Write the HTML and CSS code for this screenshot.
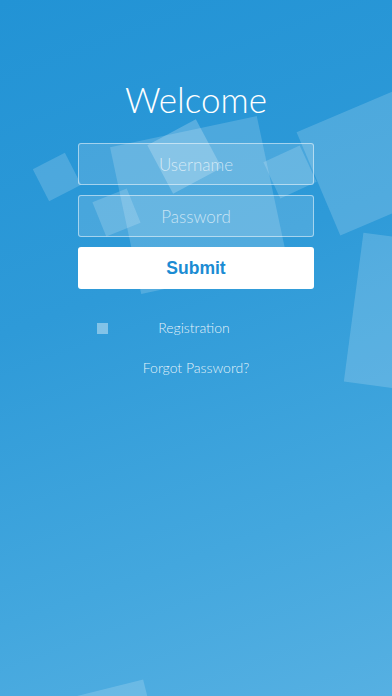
FILE: index.html
```html
<!DOCTYPE html>
<html>
<head>
<meta charset="utf-8">
<link rel="stylesheet" href="styles.css">
</head>
<body>
<div class="screen">
  <div class="decor">
    <div class="sq sq1"></div>
    <div class="sq sq2"></div>
    <div class="sq sq3"></div>
    <div class="sq sq4"></div>
    <div class="sq sq5"></div>
    <div class="sq sq6"></div>
    <div class="sq sq7"></div>
    <div class="sq sq8"></div>
  </div>
  <main class="form">
    <h1 class="title">Welcome</h1>
    <div class="field">Username</div>
    <div class="field">Password</div>
    <button class="submit">Submit</button>
    <div class="reg-row">
      <span class="check"></span>
      <span class="link">Registration</span>
    </div>
    <div class="forgot link">Forgot Password?</div>
  </main>
</div>
</body>
</html>
```
FILE: styles.css
```css
* { box-sizing: border-box; }
html, body { margin: 0; padding: 0; }
body {
  font-family: "Lato", "Open Sans", sans-serif;
  width: 392px;
  height: 696px;
  overflow: hidden;
}
.screen {
  position: relative;
  width: 392px;
  height: 696px;
  overflow: hidden;
  background: linear-gradient(160deg, #2293d5 0%, #2e9ad8 40%, #43a7de 75%, #56b0e2 100%);
}
.decor {
  position: absolute;
  inset: 0;
  pointer-events: none;
}
.sq {
  position: absolute;
  background: rgba(255, 255, 255, 0.17);
}
.sq1 { left: 39px; top: 159px; width: 36px; height: 36px; transform: rotate(-27deg); }
.sq2 { left: 124px; top: 130px; width: 150px; height: 150px; transform: rotate(-12deg); }
.sq3 { left: 157px; top: 129px; width: 55px; height: 55px; transform: rotate(-28deg); background: rgba(255,255,255,0.22); }
.sq4 { left: 98px; top: 194px; width: 37px; height: 37px; transform: rotate(-22deg); }
.sq5 { left: 314px; top: 106px; width: 112px; height: 112px; transform: rotate(-23deg); }
.sq6 { left: 270px; top: 152px; width: 40px; height: 40px; transform: rotate(-25deg); }
.sq7 { left: 353px; top: 242px; width: 150px; height: 150px; transform: rotate(7.5deg); }
.sq8 { left: 74px; top: 688px; width: 80px; height: 80px; transform: rotate(-14deg); }

.form {
  position: relative;
  width: 236px;
  margin: 0 auto;
  padding-top: 78px;
  display: flex;
  flex-direction: column;
  align-items: stretch;
}
.title {
  margin: 0 0 22px;
  font-family: "Lato", sans-serif;
  font-weight: 300;
  font-size: 35px;
  line-height: 43px;
  color: #ffffff;
  text-align: center;
}
.field {
  height: 42px;
  margin-bottom: 10px;
  border: 1px solid rgba(255, 255, 255, 0.5);
  border-radius: 3px;
  background: rgba(255, 255, 255, 0.14);
  color: rgba(255, 255, 255, 0.65);
  font-weight: 300;
  font-size: 17px;
  display: flex;
  align-items: center;
  justify-content: center;
}
.submit {
  height: 42px;
  border: none;
  border-radius: 3px;
  background: #ffffff;
  color: #1b8cd3;
  font-family: "Liberation Sans", Arial, sans-serif;
  font-weight: bold;
  font-size: 17.5px;
  padding: 0;
}
.reg-row {
  margin-top: 30px;
  display: grid;
  grid-template-columns: 1fr auto 1fr;
  align-items: center;
  height: 18px;
}
.check {
  justify-self: start;
  margin-left: 19px;
  width: 11px;
  height: 11px;
  background: rgba(255, 255, 255, 0.4);
}
.link {
  color: rgba(255, 255, 255, 0.88);
  font-weight: 300;
  font-size: 14px;
  line-height: 18px;
  text-align: center;
}
.reg-row .link { margin-left: -4px; }
.forgot { margin-top: 22px; }
```
